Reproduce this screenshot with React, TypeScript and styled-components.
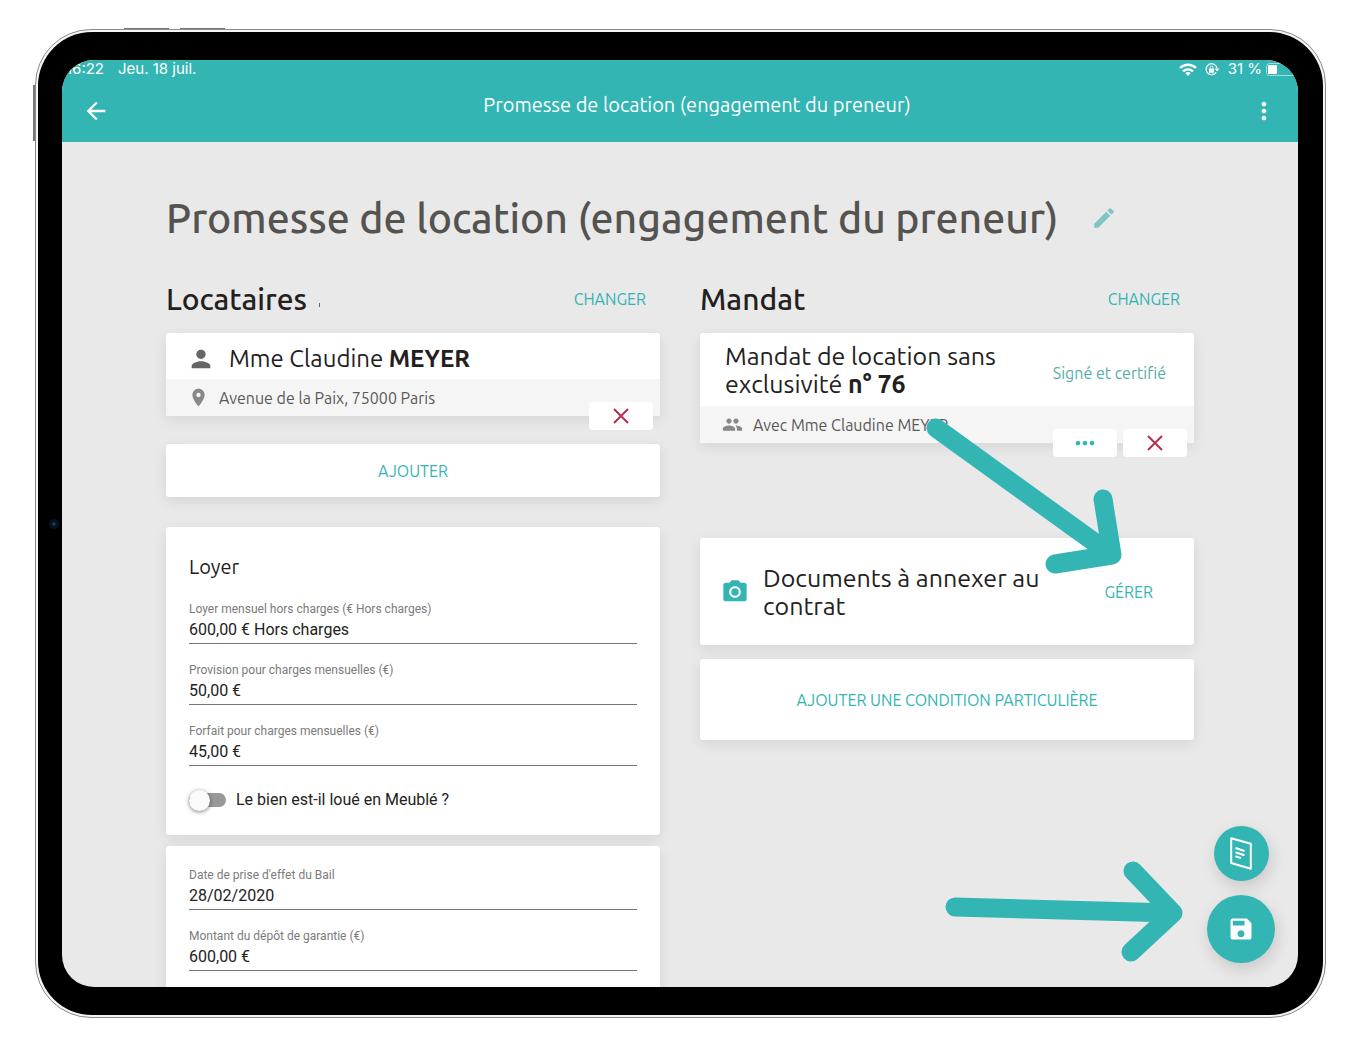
import React from "react";
import styled, { createGlobalStyle } from "styled-components";
import {
  MdArrowBack,
  MdCameraAlt,
  MdEdit,
  MdMoreHoriz,
  MdMoreVert,
  MdPeople,
  MdPerson,
  MdPlace,
  MdSave,
} from "react-icons/md";

const teal = "#33b5b4";
const ink = "#23201e";
const crimson = "#b5304f";
const ubuntu = `Ubuntu, "Noto Sans", sans-serif`;
const roboto = `Roboto, "Liberation Sans", sans-serif`;
const system = `Inter, "Liberation Sans", sans-serif`;

const GlobalStyle = createGlobalStyle`
  *, *::before, *::after { box-sizing: border-box; }
  body { margin: 0; background: #fff; color: ${ink}; font-family: ${ubuntu}; }
  h1, h2, h3, p { margin: 0; font-weight: inherit; }
  button, input { font: inherit; color: inherit; }
  button { padding: 0; border: 0; background: none; cursor: pointer; }
  svg { display: block; flex: none; }
`;

const Stage = styled.div`
  height: 100vh;
  padding: 29px 37px 33px 35px;
`;

const Tablet = styled.div`
  position: relative;
  height: 100%;
  padding: 2px;
  border: 1px solid #8a8a8a;
  border-radius: 56px;
  background: #f4f4f4;
`;

const Bezel = styled.div`
  height: 100%;
  padding: 28px 25px 28px 24px;
  border-radius: 54px;
  background: #000;
`;

const SideKey = styled.span<{ $edge: "top" | "left"; $start: number; $length: number }>`
  position: absolute;
  background: #777;
  ${(p) =>
    p.$edge === "top"
      ? `top: -2px; left: ${p.$start}px; width: ${p.$length}px; height: 1px;`
      : `left: -3px; top: ${p.$start}px; height: ${p.$length}px; width: 2px;`}
`;

const Camera = styled.span`
  position: absolute;
  left: 13px;
  top: 50%;
  width: 10px;
  height: 10px;
  border-radius: 50%;
  background: radial-gradient(circle, #1d4a5c 0 1px, #07111f 2px);
  transform: translateY(-50%);
`;

const Screen = styled.div`
  position: relative;
  display: flex;
  flex-direction: column;
  height: 100%;
  overflow: hidden;
  border-radius: 32px;
  background: #e9e9e9;
`;

const Header = styled.header`
  flex: none;
  background: ${teal};
  color: #fff;
`;

const StatusBar = styled.div`
  display: flex;
  justify-content: space-between;
  height: 18px;
  padding-left: 4px;
  font: 15px/18px ${system};
`;

const StatusGroup = styled.div`
  display: flex;
  align-items: center;
  gap: 14px;
`;

const StatusIcons = styled.div`
  display: flex;
  align-items: center;
  gap: 8px;
  white-space: nowrap;
`;

const BatteryGroup = styled.span`
  display: flex;
  align-items: center;
  gap: 4px;
`;

const Toolbar = styled.div`
  display: flex;
  align-items: center;
  height: 64px;
  padding: 2px 20px 0;
`;

const ToolbarTitle = styled.p`
  flex: 1;
  padding: 0 0 12px 34px;
  font-size: 20px;
  line-height: 24px;
  text-align: center;
`;

const Main = styled.main`
  flex: 1;
  min-height: 0;
  padding: 44px 104px 0;
  overflow: hidden;
`;

const TitleRow = styled.div`
  display: flex;
  align-items: center;
  gap: 32px;
  margin-bottom: 29px;
`;

const PageTitle = styled.h1`
  color: #555350;
  font-size: 41px;
  font-weight: 500;
  line-height: 64px;
  white-space: nowrap;
`;

const Columns = styled.div`
  display: grid;
  grid-template-columns: 1fr 1fr;
  gap: 40px;
`;

const Column = styled.section`
  display: flex;
  flex-direction: column;
`;

const ColumnHeader = styled.div`
  display: flex;
  align-items: center;
  justify-content: space-between;
  height: 40px;
  margin-bottom: 14px;
  padding-right: 14px;
`;

const ColumnTitle = styled.h2`
  display: flex;
  align-items: center;
  gap: 12px;
  font-size: 30px;
  font-weight: 500;
  line-height: 40px;
`;

const Tick = styled.span`
  width: 1px;
  height: 4px;
  margin-top: 12px;
  background: #666;
`;

const TextButton = styled.button`
  color: ${teal};
  font-size: 16px;
  line-height: 24px;
`;

const Card = styled.div<{ $gap?: number }>`
  position: relative;
  margin-top: ${(p) => p.$gap ?? 0}px;
  border-radius: 3px;
  background: #fff;
  box-shadow: 0 4px 14px rgba(0, 0, 0, 0.09);
`;

const PartyHead = styled.div<{ $tall?: boolean }>`
  display: flex;
  align-items: center;
  gap: 14px;
  height: ${(p) => (p.$tall ? 73 : 46)}px;
  padding: ${(p) => (p.$tall ? "0 28px 0 25px" : "6px 21px 0")};
  color: #666;
`;

const CardTitle = styled.h3<{ $large?: boolean }>`
  flex: 1;
  color: ${ink};
  font-size: ${(p) => (p.$large ? 25 : 24)}px;
  line-height: 28px;
`;

const Status = styled.span`
  padding-top: 6px;
  color: #55adab;
  font-size: 16px;
  line-height: 24px;
`;

const PartyDetail = styled.div`
  display: flex;
  align-items: center;
  gap: 10px;
  height: 37px;
  padding: 0 22px;
  background: #f5f5f5;
  color: #888;
`;

const DetailText = styled.p`
  color: #5b5957;
  font-size: 16px;
  line-height: 24px;
`;

const CardActions = styled.div`
  position: absolute;
  right: 7px;
  bottom: -14px;
  display: flex;
  gap: 6px;
`;

const ActionButton = styled.button<{ $color: string }>`
  display: grid;
  place-items: center;
  width: 64px;
  height: 28px;
  border-radius: 4px;
  background: #fff;
  color: ${(p) => p.$color};
`;

const CardButton = styled.button<{ $height: number }>`
  display: block;
  width: 100%;
  height: ${(p) => p.$height}px;
  color: ${teal};
  font-size: 16px;
  line-height: 24px;
`;

const Form = styled.form`
  display: flex;
  flex-direction: column;
  gap: 17px;
  padding: 20px 23px 23px;
  font-family: ${roboto};
`;

const FormTitle = styled.h3`
  margin: 8px 0 4px;
  font: 20px/24px ${ubuntu};
`;

const FieldBox = styled.div`
  display: flex;
  flex-direction: column;
`;

const FieldLabel = styled.label`
  color: #7b7b7b;
  font-size: 12px;
  line-height: 18px;
`;

const FieldInput = styled.input`
  width: 100%;
  height: 26px;
  padding: 0 0 2px;
  border: 0;
  border-bottom: 1px solid #757575;
  outline: 0;
  background: none;
  color: #222;
  font-size: 16px;
  line-height: 22px;
`;

const SwitchRow = styled.label`
  display: flex;
  align-items: center;
  gap: 10px;
  margin-top: 5px;
  color: #222;
  font-size: 16px;
  line-height: 24px;
`;

const Switch = styled.input`
  display: flex;
  align-items: center;
  width: 37px;
  height: 14px;
  margin: 0;
  border-radius: 7px;
  background: #999;
  appearance: none;

  &::before {
    content: "";
    width: 21px;
    height: 21px;
    border-radius: 50%;
    background: #fafafa;
    box-shadow: 0 1px 4px rgba(0, 0, 0, 0.5);
  }

  &:checked { justify-content: flex-end; }
`;

const DocumentsRow = styled.div`
  display: flex;
  align-items: center;
  gap: 14px;
  height: 107px;
  padding: 0 41px 0 21px;
  color: ${teal};
`;

const Floating = styled.div`
  position: absolute;
  right: 23px;
  bottom: 24px;
  display: flex;
  flex-direction: column;
  align-items: center;
  gap: 14px;
`;

const RoundButton = styled.button<{ $size: number }>`
  display: grid;
  place-items: center;
  width: ${(p) => p.$size}px;
  height: ${(p) => p.$size}px;
  border-radius: 50%;
  background: ${teal};
  color: #fff;
  box-shadow: 2px 6px 16px rgba(0, 0, 0, 0.14);
`;

const ManageArrow = styled.svg`
  position: absolute;
  top: 350px;
  right: 168px;
`;

const SaveArrow = styled.svg`
  position: absolute;
  right: 108px;
  bottom: 17px;
`;

const WifiIcon = () => (
  <svg width="18" height="13" viewBox="0 0 18 13" fill="none" stroke="#fff" strokeWidth="2.400">
    <path d="M1 5a11.500 11.500 0 0 1 16 0" />
    <path d="M4 8.400a7.300 7.300 0 0 1 10 0" />
    <path d="M6.300 10.300a3.900 3.900 0 0 1 5.400 0L9 13z" fill="#fff" stroke="none" />
  </svg>
);

const RotationLockIcon = () => (
  <svg width="15" height="13" viewBox="0 0 15 13" fill="none" stroke="#fff">
    <path d="M11.200 9.300A5.500 5.500 0 1 1 12 5" strokeWidth="1.200" />
    <path d="M9.600 5.400h5l-2.500 3.200z" fill="#fff" stroke="none" />
    <rect x="4" y="5.800" width="5" height="3.900" rx="0.500" fill="#fff" stroke="none" />
    <path d="M5 6V4.600a1.500 1.500 0 0 1 3 0V6" strokeWidth="1" />
  </svg>
);

const BatteryIcon = () => (
  <svg width="32" height="13" viewBox="0 0 32 13" fill="none">
    <rect x="0.500" y="0.500" width="36" height="12" rx="3" stroke="#a5dddc" />
    <rect x="2" y="2" width="9" height="9" rx="1" fill="#fff" />
  </svg>
);

const CrossIcon = () => (
  <svg width="16" height="16" viewBox="0 0 16 16" fill="none" stroke="currentColor" strokeWidth="2">
    <path d="M1 1l14 14M15 1L1 15" />
  </svg>
);

const ContractIcon = () => (
  <svg width="22" height="33" viewBox="0 0 22 33" fill="none" stroke="currentColor" strokeWidth="2">
    <path d="M1.200 1.200l19.600 5.600v25L1.200 26z" strokeLinejoin="round" />
    <path d="M5.500 11l9 3M5.500 15.200l9 3M5.500 19.300l5.500 1.800" />
  </svg>
);

type FieldProps = { id: string; label: string; value: string };

const Field = ({ id, label, value }: FieldProps) => (
  <FieldBox>
    <FieldLabel htmlFor={id}>{label}</FieldLabel>
    <FieldInput id={id} defaultValue={value} />
  </FieldBox>
);

const rentFields: FieldProps[] = [
  { id: "rent", label: "Loyer mensuel hors charges (€ Hors charges)", value: "600,00 € Hors charges" },
  { id: "provision", label: "Provision pour charges mensuelles (€)", value: "50,00 €" },
  { id: "flat-fee", label: "Forfait pour charges mensuelles (€)", value: "45,00 €" },
];

const leaseFields: FieldProps[] = [
  { id: "start-date", label: "Date de prise d'effet du Bail", value: "28/02/2020" },
  { id: "deposit", label: "Montant du dépôt de garantie (€)", value: "600,00 €" },
];

export default function App() {
  return (
    <Stage>
      <GlobalStyle />
      <Tablet>
        <SideKey $edge="top" $start={88} $length={45} />
        <SideKey $edge="top" $start={144} $length={45} />
        <SideKey $edge="left" $start={55} $length={56} />
        <Camera />
        <Bezel>
          <Screen>
            <Header>
              <StatusBar>
                <StatusGroup>
                  <span>16:22</span>
                  <span>Jeu. 18 juil.</span>
                </StatusGroup>
                <StatusIcons>
                  <WifiIcon />
                  <RotationLockIcon />
                  <BatteryGroup>
                    31 %
                    <BatteryIcon />
                  </BatteryGroup>
                </StatusIcons>
              </StatusBar>
              <Toolbar>
                <button aria-label="Retour">
                  <MdArrowBack size={28} />
                </button>
                <ToolbarTitle>Promesse de location (engagement du preneur)</ToolbarTitle>
                <button aria-label="Plus d'options">
                  <MdMoreVert size={28} />
                </button>
              </Toolbar>
            </Header>

            <Main>
              <TitleRow>
                <PageTitle>Promesse de location (engagement du preneur)</PageTitle>
                <TextButton aria-label="Modifier le titre">
                  <MdEdit size={26} color="#80c4c3" />
                </TextButton>
              </TitleRow>

              <Columns>
                <Column>
                  <ColumnHeader>
                    <ColumnTitle>
                      Locataires
                      <Tick />
                    </ColumnTitle>
                    <TextButton>CHANGER</TextButton>
                  </ColumnHeader>
                  <Card>
                    <PartyHead>
                      <MdPerson size={28} />
                      <CardTitle>
                        Mme Claudine <b>MEYER</b>
                      </CardTitle>
                    </PartyHead>
                    <PartyDetail>
                      <MdPlace size={21} />
                      <DetailText>Avenue de la Paix, 75000 Paris</DetailText>
                    </PartyDetail>
                    <CardActions>
                      <ActionButton $color={crimson} aria-label="Retirer le locataire">
                        <CrossIcon />
                      </ActionButton>
                    </CardActions>
                  </Card>
                  <Card $gap={28}>
                    <CardButton $height={53}>AJOUTER</CardButton>
                  </Card>
                  <Card $gap={30}>
                    <Form>
                      <FormTitle>Loyer</FormTitle>
                      {rentFields.map((field) => (
                        <Field key={field.id} {...field} />
                      ))}
                      <SwitchRow>
                        <Switch type="checkbox" />
                        Le bien est-il loué en Meublé ?
                      </SwitchRow>
                    </Form>
                  </Card>
                  <Card $gap={11}>
                    <Form>
                      {leaseFields.map((field) => (
                        <Field key={field.id} {...field} />
                      ))}
                    </Form>
                  </Card>
                </Column>

                <Column>
                  <ColumnHeader>
                    <ColumnTitle>Mandat</ColumnTitle>
                    <TextButton>CHANGER</TextButton>
                  </ColumnHeader>
                  <Card>
                    <PartyHead $tall>
                      <CardTitle $large>
                        Mandat de location sans exclusivité <b>n° 76</b>
                      </CardTitle>
                      <Status>Signé et certifié</Status>
                    </PartyHead>
                    <PartyDetail>
                      <MdPeople size={21} />
                      <DetailText>Avec Mme Claudine MEYER</DetailText>
                    </PartyDetail>
                    <CardActions>
                      <ActionButton $color={teal} aria-label="Plus d'actions">
                        <MdMoreHoriz size={28} />
                      </ActionButton>
                      <ActionButton $color={crimson} aria-label="Retirer le mandat">
                        <CrossIcon />
                      </ActionButton>
                    </CardActions>
                  </Card>
                  <Card $gap={95}>
                    <DocumentsRow>
                      <MdCameraAlt size={28} />
                      <CardTitle $large>Documents à annexer au contrat</CardTitle>
                      <TextButton>GÉRER</TextButton>
                    </DocumentsRow>
                  </Card>
                  <Card $gap={14}>
                    <CardButton $height={81}>AJOUTER UNE CONDITION PARTICULIÈRE</CardButton>
                  </Card>
                </Column>
              </Columns>
            </Main>

            <Floating>
              <RoundButton $size={55} aria-label="Voir le contrat">
                <ContractIcon />
              </RoundButton>
              <RoundButton $size={68} aria-label="Enregistrer">
                <MdSave size={28} />
              </RoundButton>
            </Floating>

            <ManageArrow
              width="210"
              height="170"
              viewBox="0 0 210 170"
              fill="none"
              stroke={teal}
              strokeWidth="19"
              strokeLinecap="round"
              strokeLinejoin="round"
            >
              <path d="M16 18L192 145M183 89l9 56-57 9" />
            </ManageArrow>
            <SaveArrow
              width="250"
              height="110"
              viewBox="0 0 250 110"
              fill="none"
              stroke={teal}
              strokeWidth="19"
              strokeLinecap="round"
              strokeLinejoin="round"
            >
              <path d="M15 47L233 53M193 11l40 42-42 39" />
            </SaveArrow>
          </Screen>
        </Bezel>
      </Tablet>
    </Stage>
  );
}
